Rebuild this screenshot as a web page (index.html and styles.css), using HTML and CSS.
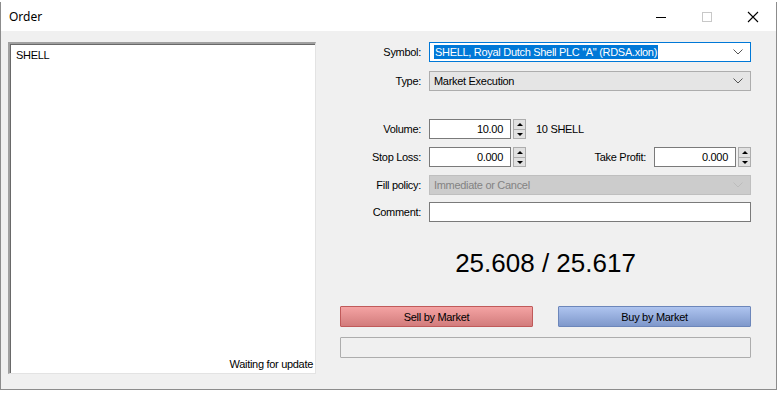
FILE: index.html
```html
<!DOCTYPE html>
<html lang="en">
<head>
    <meta charset="UTF-8">
    <title>Order</title>
    <link rel="stylesheet" href="styles.css">
</head>
<body>
    <div id="janela">
        <div id="titulo">
            <span class="titulo-texto">Order</span>
            <div class="titulo-botoes">
                <svg width="46" height="29" viewBox="0 0 46 29"><line x1="18" y1="15.5" x2="28" y2="15.5" stroke="#000" stroke-width="1"/></svg>
                <svg width="46" height="29" viewBox="0 0 46 29"><rect x="18.5" y="10.5" width="9" height="9" fill="none" stroke="#c8c8c8" stroke-width="1"/></svg>
                <svg width="46" height="29" viewBox="0 0 46 29"><path d="M18 10 L28 20 M28 10 L18 20" stroke="#000" stroke-width="1.1"/></svg>
            </div>
        </div>

        <div id="corpo">
            <div id="cotacoes">
                <div class="cotacao-topo">SHELL</div>
                <div class="cotacao-rodape">Waiting for update</div>
            </div>

            <div id="formulario">
                <div class="linha">
                    <label>Symbol:</label>
                    <div class="combo combo-foco">
                        <span class="selecionado">SHELL, Royal Dutch Shell PLC "A" (RDSA.xlon)</span>
                        <svg class="seta" width="10" height="6" viewBox="0 0 10 6"><path d="M0.5 0.5 L5 5 L9.5 0.5" fill="none" stroke="#555" stroke-width="1"/></svg>
                    </div>
                </div>
                <div class="linha linha-tipo">
                    <label>Type:</label>
                    <div class="combo combo-cinza">
                        <span>Market Execution</span>
                        <svg class="seta" width="10" height="6" viewBox="0 0 10 6"><path d="M0.5 0.5 L5 5 L9.5 0.5" fill="none" stroke="#555" stroke-width="1"/></svg>
                    </div>
                </div>

                <div class="linha linha-volume">
                    <label>Volume:</label>
                    <div class="campo">10.00</div>
                    <div class="spin"><span class="spin-cima"></span><span class="spin-baixo"></span></div>
                    <span class="unidade">10 SHELL</span>
                </div>
                <div class="linha linha-stop">
                    <label>Stop Loss:</label>
                    <div class="campo">0.000</div>
                    <div class="spin"><span class="spin-cima"></span><span class="spin-baixo"></span></div>
                    <label class="rotulo-take">Take Profit:</label>
                    <div class="campo">0.000</div>
                    <div class="spin"><span class="spin-cima"></span><span class="spin-baixo"></span></div>
                </div>
                <div class="linha linha-fill">
                    <label>Fill policy:</label>
                    <div class="combo combo-desativado">
                        <span>Immediate or Cancel</span>
                        <svg class="seta" width="10" height="6" viewBox="0 0 10 6"><path d="M0.5 0.5 L5 5 L9.5 0.5" fill="none" stroke="#bcbcbc" stroke-width="1"/></svg>
                    </div>
                </div>
                <div class="linha linha-comentario">
                    <label>Comment:</label>
                    <div class="campo campo-largo"></div>
                </div>

                <div id="preco">25.608 / 25.617</div>

                <div id="botoes">
                    <button class="vender">Sell by Market</button>
                    <button class="comprar">Buy by Market</button>
                </div>
                <div id="progresso"></div>
            </div>
        </div>
    </div>
</body>
</html>
```

FILE: styles.css
```css
body {
    margin: 0;
    padding: 0;
    background-color: #fff;
    font-family: "Liberation Sans", Arial, sans-serif;
    font-size: 11px;
    letter-spacing: -0.3px;
    color: #000;
}

#janela {
    margin-top: 2px;
    width: 777px;
    height: 388px;
    box-sizing: border-box;
    border: 1px solid #8c8c8c;
    border-top: none;
    background-color: #f0f0f0;
    display: flex;
    flex-direction: column;
}

#titulo {
    height: 29px;
    background-color: #fff;
    display: flex;
    align-items: center;
    justify-content: space-between;
    flex-shrink: 0;
}

.titulo-texto {
    font-family: "Noto Sans", sans-serif;
    font-size: 12px;
    letter-spacing: 0;
    padding-left: 8px;
    padding-bottom: 1px;
}

.titulo-botoes {
    display: flex;
    margin-right: 0;
}

.titulo-botoes svg {
    display: block;
}

#corpo {
    display: flex;
    padding: 11px 0 0 7px;
}

#cotacoes {
    width: 308px;
    height: 332px;
    box-sizing: border-box;
    background-color: #fff;
    border-top: 2px solid #a0a0a0;
    border-left: 2px solid #a0a0a0;
    border-right: 1px solid #e3e3e3;
    border-bottom: 1px solid #e3e3e3;
    box-shadow: inset 1px 1px 0 #696969;
    display: flex;
    flex-direction: column;
    justify-content: space-between;
    padding: 5px 2px 3px 6px;
}

.cotacao-rodape {
    text-align: right;
}

#formulario {
    margin-left: 24px;
    width: 411px;
    display: flex;
    flex-direction: column;
}

.linha {
    display: flex;
    align-items: center;
    height: 20px;
}

.linha label {
    width: 81px;
    text-align: right;
    margin-right: 8px;
    flex-shrink: 0;
}

.linha-tipo { margin-top: 9px; }
.linha-volume { margin-top: 28px; }
.linha-stop { margin-top: 8px; }
.linha-fill { margin-top: 8px; }
.linha-comentario { margin-top: 7px; }

.combo {
    flex: 1;
    height: 20px;
    box-sizing: border-box;
    display: flex;
    align-items: center;
    justify-content: space-between;
    padding: 0 4px 0 4px;
    border: 1px solid #adadad;
}

.combo-foco {
    background-color: #fff;
    border-color: #0078d7;
}

.combo-cinza {
    background-color: #e5e5e5;
}

.combo-desativado {
    background-color: #cccccc;
    border-color: #bfbfbf;
    color: #838383;
}

.selecionado {
    background-color: #0078d7;
    color: #fff;
    padding: 1px 1px;
}

.seta {
    margin-right: 3px;
}

.campo {
    width: 82px;
    height: 20px;
    box-sizing: border-box;
    border: 1px solid #7a7a7a;
    background-color: #fff;
    text-align: right;
    padding: 0 7px;
    line-height: 18px;
}

.campo-largo {
    flex: 1;
}

.spin {
    width: 13px;
    height: 20px;
    margin-left: 2px;
    display: flex;
    flex-direction: column;
}

.spin span {
    flex: 1;
    box-sizing: border-box;
    border: 1px solid #adadad;
    background-color: #e1e1e1;
    position: relative;
}

.spin-baixo {
    border-top: none !important;
}

.spin span::after {
    content: "";
    position: absolute;
    left: 3px;
    border-left: 3px solid transparent;
    border-right: 3px solid transparent;
}

.spin-cima::after {
    top: 3px;
    border-bottom: 3px solid #000;
}

.spin-baixo::after {
    top: 3px;
    border-top: 3px solid #000;
}

.unidade {
    margin-left: 10px;
}

.linha .rotulo-take {
    width: auto;
    margin-left: auto;
    margin-right: 8px;
}

#preco {
    font-size: 26px;
    letter-spacing: 0;
    text-align: center;
    margin-top: 25px;
    height: 32px;
    line-height: 32px;
}

#botoes {
    display: flex;
    justify-content: space-between;
    margin-top: 27px;
}

#botoes button {
    width: 193px;
    height: 21px;
    font-family: "Liberation Sans", Arial, sans-serif;
    font-size: 11px;
    letter-spacing: -0.3px;
    padding: 0;
    border-radius: 1px;
    cursor: pointer;
}

.vender {
    border: 1px solid #c05a5a;
    background: linear-gradient(#f4a3a3, #d27c7c);
}

.comprar {
    border: 1px solid #6c86ba;
    background: linear-gradient(#aec4ef, #7f98cb);
}

#progresso {
    margin-top: 10px;
    height: 21px;
    box-sizing: border-box;
    border: 1px solid #adadad;
    border-radius: 1px;
}
```
